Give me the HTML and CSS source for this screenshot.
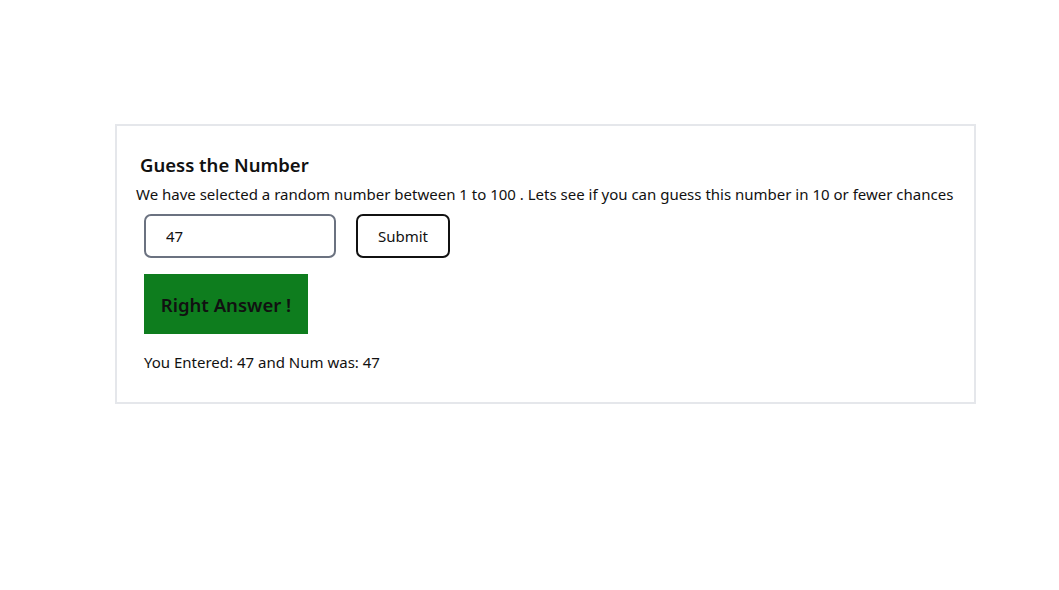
FILE: index.html
```html
<!DOCTYPE html>
<html>
<head>
<meta charset="utf-8">
<link rel="stylesheet" href="styles.css">
</head>
<body>
<div class="page">
  <div class="card">
    <h2 class="title">Guess the Number</h2>
    <p class="desc">We have selected a random number between 1 to 100 . Lets see if you can guess this number in 10 or fewer chances</p>
    <div class="form-row">
      <input class="guess" type="text" value="47">
      <button class="submit">Submit</button>
    </div>
    <div class="result">Right Answer !</div>
    <p class="log">You Entered: 47 and Num was: 47</p>
  </div>
</div>
</body>
</html>
```
FILE: styles.css
```css
html, body {
  margin: 0;
  padding: 0;
  background: #ffffff;
}
body {
  font-family: "Noto Sans", "Open Sans", sans-serif;
  color: #111111;
}
.page {
  padding-top: 124px;
  padding-left: 115px;
}
.card {
  box-sizing: content-box;
  width: 838px;
  height: 276px;
  border: 2px solid #e5e7eb;
  padding: 0 0 0 19px;
}
.title {
  margin: 26px 0 0 4px;
  font-size: 18.5px;
  font-weight: 600;
  line-height: 26px;
}
.desc {
  margin: 5px 0 0 0;
  font-size: 15px;
  line-height: 22px;
  white-space: nowrap;
}
.form-row {
  display: flex;
  gap: 20px;
  margin: 9px 0 0 8px;
}
.guess {
  box-sizing: border-box;
  width: 192px;
  height: 44px;
  border: 2px solid #6b7280;
  border-radius: 7px;
  padding: 0 0 0 20px;
  font-family: inherit;
  font-size: 15px;
  color: #111;
  outline: none;
}
.submit {
  box-sizing: border-box;
  width: 94px;
  height: 44px;
  border: 2px solid #111111;
  border-radius: 7px;
  background: #ffffff;
  font-family: inherit;
  font-size: 15px;
  color: #111;
}
.result {
  margin: 16px 0 0 8px;
  width: 164px;
  height: 60px;
  background: #0e7d1e;
  display: flex;
  align-items: center;
  justify-content: center;
  font-size: 18.5px;
  font-weight: 600;
  color: #111;
}
.log {
  margin: 17px 0 0 8px;
  font-size: 15px;
  line-height: 22px;
}
```
